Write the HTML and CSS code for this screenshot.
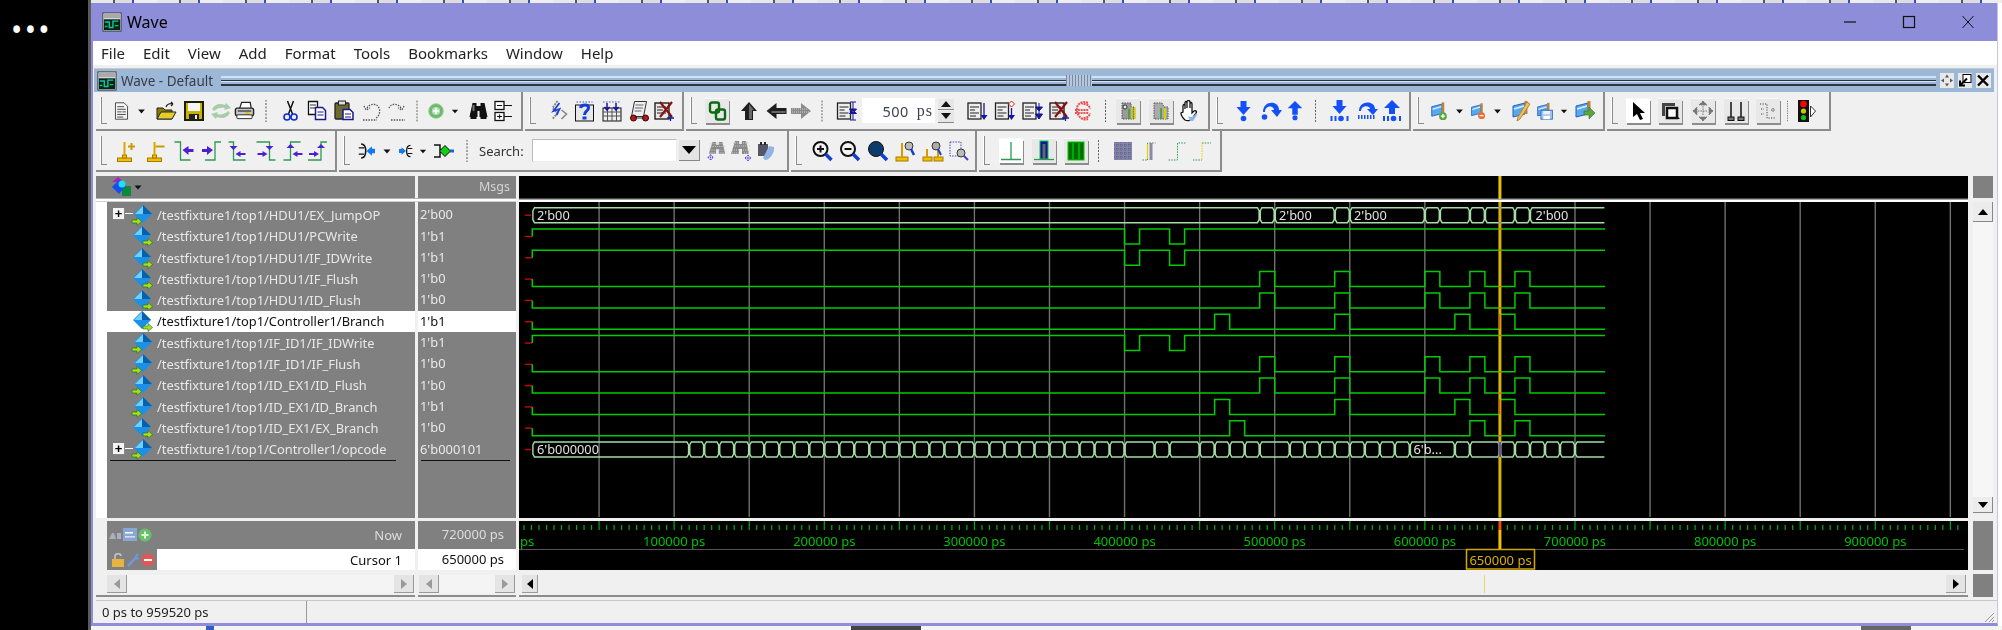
FILE: index.html
```html
<!DOCTYPE html>
<html lang="en">
<head>
<meta charset="utf-8">
<title>Wave</title>
<link rel="stylesheet" href="styles.css">
</head>
<body>
<svg class="defs" width="0" height="0" aria-hidden="true">
<defs>
<symbol id="i-wave" viewBox="0 0 22 22"><rect x="1" y="1" width="20" height="20" fill="#eee" stroke="#333"/><rect x="2" y="2" width="18" height="5" fill="#aaa"/><rect x="2" y="8" width="18" height="12" fill="#02241c"/><path d="M3 11h5v6h4v-7h6" fill="none" stroke="#12c8a0" stroke-width="1.5"/><path d="M3 16h3M14 15h4" stroke="#14d020" stroke-width="1.5"/></symbol>
<symbol id="i-doc" viewBox="0 0 22 22"><path d="M4 1.500h10l4 4v15h-14z" fill="#f4f4f4" stroke="#333"/><path d="M6 6h8M6 9h10M6 12h5M12 12h4M6 15h10M6 18h7" stroke="#333"/></symbol>
<symbol id="i-drop" viewBox="0 0 22 22"><path d="M7.500 9.500h7l-3.500 4z" fill="#111"/></symbol>
<symbol id="i-open" viewBox="0 0 22 22"><path d="M2 8h6l2 2h7v9h-15z" fill="#8f7a00" stroke="#222"/><path d="M2 19l4-7h15l-4 7z" fill="#e6cc2a" stroke="#222"/><path d="M11 7c1-3 4-4 7-3m0 0l-2-2m2 2l-2 2" fill="none" stroke="#222" stroke-width="1.300"/></symbol>
<symbol id="i-save" viewBox="0 0 22 22"><rect x="2" y="2" width="18" height="18" fill="#c8b400" stroke="#1d1d00" stroke-width="2"/><rect x="5" y="3" width="12" height="8" fill="#f4f4f4"/><rect x="6" y="14" width="10" height="6" fill="#222"/><rect x="12" y="15" width="2" height="4" fill="#eee"/></symbol>
<symbol id="i-reload" viewBox="0 0 22 22"><path d="M2 9c3-5 8-6 13-4l1-2 5 5-7 2 1-2c-4-1-8 0-11 3zM20 13c-3 5-8 6-13 4l-1 2-5-5 7-2-1 2c4 1 8 0 11-3z" fill="#a8cca8"/></symbol>
<symbol id="i-print" viewBox="0 0 22 22"><path d="M6 8l2-6h9l1 6" fill="#fff" stroke="#222" stroke-width="1.300"/><rect x="1.500" y="8" width="19" height="8" rx="2" fill="#c8c8c8" stroke="#222" stroke-width="1.500"/><rect x="3" y="15" width="16" height="4" rx="1" fill="#fff" stroke="#222"/><path d="M4 11h14" stroke="#333" stroke-width="1.300"/><rect x="12" y="12" width="4" height="2" fill="#d8c200"/></symbol>
<symbol id="i-sep" viewBox="0 0 22 22"><path d="M11 -4v30" stroke="#555" stroke-dasharray="2 1.500"/></symbol>
<symbol id="i-cut" viewBox="0 0 22 22"><path d="M8 1l5 13M14 1l-5 13" stroke="#111" stroke-width="1.500"/><circle cx="7.500" cy="17" r="3" fill="none" stroke="#0c2cdc" stroke-width="1.600"/><circle cx="14.500" cy="17" r="3" fill="none" stroke="#0c2cdc" stroke-width="1.600"/></symbol>
<symbol id="i-copy" viewBox="0 0 22 22"><path d="M2.500 1.500h9v13h-9z" fill="#fff" stroke="#111" stroke-width="1.300"/><path d="M4 5h6M4 8h6" stroke="#333"/><path d="M9.500 7.500h7l3 3v9h-10z" fill="#fff" stroke="#1a1a8c" stroke-width="1.500"/><path d="M11.500 12h6M11.500 15h6" stroke="#1a1a8c"/></symbol>
<symbol id="i-paste" viewBox="0 0 22 22"><rect x="1.500" y="3" width="14" height="16" rx="1" fill="#6c6a30" stroke="#222" stroke-width="1.300"/><rect x="5" y="1" width="7" height="4" fill="#ddd" stroke="#222"/><path d="M9.500 9.500h7l3 3v7h-10z" fill="#fff" stroke="#1a1a8c" stroke-width="1.500"/><path d="M11.500 14h6M11.500 17h6" stroke="#1a1a8c"/></symbol>
<symbol id="i-undo" viewBox="0 0 22 22"><path d="M6 8c3-5 10-5 12 0s-1 9-3 10M3 6l2 4 4-2M2 20h14" fill="none" stroke="#555" stroke-width="1.300" stroke-dasharray="1.500 1.200"/></symbol>
<symbol id="i-redo" viewBox="0 0 22 22"><path d="M16 8c-3-5-10-5-12 0M19 6l-2 4-4-2M6 20h14" fill="none" stroke="#555" stroke-width="1.300" stroke-dasharray="1.500 1.200"/></symbol>
<symbol id="i-add" viewBox="0 0 22 22"><circle cx="11" cy="11" r="9" fill="#6fb96f" stroke="#9ad09a"/><circle cx="11" cy="11" r="5" fill="#b8e0b8"/><path d="M11 7.500v7M7.500 11h7" stroke="#fff" stroke-width="2"/></symbol>
<symbol id="i-bino" viewBox="0 0 22 22"><path d="M5 3h4v3h4v-3h4l3 14h-8v-6h-2v6h-8z" fill="#111"/><rect x="3" y="13" width="6" height="6" fill="#111"/><rect x="13" y="13" width="6" height="6" fill="#111"/><rect x="5" y="5" width="2" height="6" fill="#777"/></symbol>
<symbol id="i-hier" viewBox="0 0 22 22"><rect x="3" y="1.500" width="9" height="8" fill="#fff" stroke="#111" stroke-width="1.300"/><rect x="3" y="12.500" width="9" height="8" fill="#fff" stroke="#111" stroke-width="1.300"/><path d="M12 5.500h8M12 16.500h8M5 5.500h5M5 16.500h5M7.500 14.500v4" stroke="#111" stroke-width="1.200"/></symbol>
<symbol id="i-comp" viewBox="0 0 22 22"><path d="M11 1l-5 7 5 5-5 6" fill="none" stroke="#888" stroke-width="2" stroke-dasharray="2 1"/><path d="M13 3l-6 8 6-2-3 6" fill="none" stroke="#2040d0" stroke-width="1.800"/><path d="M15 10l5 4-5 5" fill="none" stroke="#888" stroke-width="1.600"/></symbol>
<symbol id="i-help" viewBox="0 0 22 22"><rect x="2" y="5" width="18" height="16" fill="#e8e8e8" stroke="#111"/><path d="M3 2h16" stroke="#4050c0" stroke-dasharray="1.500 1.500"/><path d="M7 8c1-4 9-4 8 0 0 3-4 3-4 7" fill="none" stroke="#1040d8" stroke-width="3"/><rect x="9" y="16.500" width="4" height="3" fill="#1040d8"/></symbol>
<symbol id="i-grid" viewBox="0 0 22 22"><rect x="2" y="8" width="18" height="13" fill="#eee" stroke="#111"/><path d="M2 12h18M2 16h18M6.500 8v13M11 8v13M15.500 8v13" stroke="#555"/><path d="M2 2h18" stroke="#4050c0" stroke-dasharray="1.500 1.500"/><path d="M6 3v7M3.500 7l2.500 3 2.500-3M15 3v7M12.500 7l2.500 3 2.500-3" fill="none" stroke="#14149c" stroke-width="1.500"/></symbol>
<symbol id="i-scroll" viewBox="0 0 22 22"><path d="M6 1.500h12l-3 15h-12z" fill="#eee" stroke="#333"/><path d="M7 5h8M6.500 8h8M6 11h7" stroke="#667"/><circle cx="5" cy="18" r="3" fill="#c01818" stroke="#300"/><circle cx="17" cy="18" r="3" fill="#c01818" stroke="#300"/><path d="M5 18h12" stroke="#333"/></symbol>
<symbol id="i-docx" viewBox="0 0 22 22"><rect x="2" y="3" width="14" height="16" fill="#e8e8e8" stroke="#111" stroke-width="1.300"/><path d="M4 7h9M4 10h6M4 13h9" stroke="#222"/><path d="M7 2l12 15M19 2l-12 15" stroke="#8a1010" stroke-width="2.200"/><path d="M14 18h7M17.500 15v6" stroke="#1a1a9c" stroke-width="1.300"/></symbol>
<symbol id="i-chain" viewBox="0 0 22 22"><rect x="4" y="2.500" width="9" height="10" rx="2" fill="none" stroke="#0c6a10" stroke-width="2.400"/><rect x="10" y="9.500" width="9" height="10" rx="2" fill="none" stroke="#0c6a10" stroke-width="2.400"/></symbol>
<symbol id="i-up" viewBox="0 0 22 22"><path d="M11 2l8 9h-4v9h-8v-9h-4z" fill="#1e1e1e"/><path d="M11 4v15h3v-9h2z" fill="#6a6a6a"/></symbol>
<symbol id="i-left" viewBox="0 0 22 22"><path d="M1 11l10-8v5h10v6h-10v5z" fill="#1e1e1e"/><path d="M6 13h14v-2h-14z" fill="#666"/></symbol>
<symbol id="i-right" viewBox="0 0 22 22"><path d="M21 11l-10-8v5h-10v6h10v5z" fill="#8a8a8a"/><path d="M2 9h15M2 12h17" stroke="#cfcfcf" stroke-dasharray="1 1"/></symbol>
<symbol id="i-mini" viewBox="0 0 22 22"><rect x="1.500" y="3" width="13" height="16" fill="#eee" stroke="#222" stroke-width="1.300"/><path d="M3.500 7h9M3.500 10h5M3.500 13h9M3.500 16h6" stroke="#222" stroke-width="1.200"/></symbol>
<symbol id="i-span" viewBox="0 0 22 22"><use href="#i-mini" width="22" height="22"/><path d="M17 2v18M14 2h6M14 20h6M13.500 9h7l-3.500 4zM13.500 13.500h7l-3.500-3z" stroke="#14149c" fill="#14149c"/></symbol>
<symbol id="i-dn1" viewBox="0 0 22 22"><use href="#i-mini" width="22" height="22"/><path d="M17.500 3v14" stroke="#14149c" stroke-width="1.300"/><path d="M14 15h7l-3.500 5z" fill="#14149c"/></symbol>
<symbol id="i-dn2" viewBox="0 0 22 22"><use href="#i-mini" width="22" height="22"/><path d="M17.500 8v9" stroke="#14149c" stroke-width="1.300"/><path d="M14 15h7l-3.500 5z" fill="#14149c"/><path d="M17.500 1l3 3-3 3-3-3z" fill="#fff" stroke="#d02020"/></symbol>
<symbol id="i-dn3" viewBox="0 0 22 22"><use href="#i-mini" width="22" height="22"/><path d="M14 7h7l-3.500 4zM14 14h7l-3.500 5zM17.500 3v5M17.500 11v4" fill="#14149c" stroke="#14149c"/></symbol>
<symbol id="i-redc" viewBox="0 0 22 22"><path d="M16 3c-7-3-12 2-11 8s6 10 11 8M9 3c3 2 8 0 9 6M9 19c3-2 8 0 9-6M3 10h14M3 13h14" fill="none" stroke="#e85050" stroke-width="2" stroke-dasharray="2 .8"/></symbol>
<symbol id="i-dith1" viewBox="0 0 22 22"><path d="M5 3h9v4h3v12h-12z" fill="#9a9a9a" stroke="#555" stroke-dasharray="1.500 1"/><path d="M15 7v12M18 7v12" stroke="#d8d000" stroke-width="1.500"/><path d="M12 9v10" stroke="#30a030" stroke-width="1.500"/><circle cx="8" cy="7" r="2" fill="#eee" stroke="#333"/></symbol>
<symbol id="i-dith2" viewBox="0 0 22 22"><path d="M4 3h8l2 4h4v12h-14z" fill="#aaa" stroke="#555" stroke-dasharray="1.500 1"/><path d="M15 8v11" stroke="#d8d000" stroke-width="2"/><path d="M11 8v11" stroke="#30a030" stroke-width="1.500"/></symbol>
<symbol id="i-hand" viewBox="0 0 22 22"><path d="M5 12V6c0-2 2-2 2 0v3-6c0-2 2-2 2 0v5-6c0-2 3-2 3 0v6-4c0-2 2-2 2 0v9l2-2c2-1 3 1 2 2l-4 6c-1 2-5 2-7 1-2-2-4-5-4-7z" fill="#fff" stroke="#111" stroke-width="1.300"/><path d="M10 16c3 2 6 1 8-3l1 2-4 6h-3z" fill="#8eb4e8"/></symbol>
<symbol id="a-dn" viewBox="0 0 22 22"><path d="M8 1h6v6h4l-7 8-7-8h4z" fill="#1450f8"/><circle cx="11" cy="18.500" r="2.800" fill="#1450f8"/></symbol>
<symbol id="a-ov" viewBox="0 0 22 22"><path d="M3 12c0-12 16-12 16-2h3l-5 7-6-7h3c0-5-9-5-9 2z" fill="#1450f8"/><circle cx="4.500" cy="17" r="2.800" fill="#1450f8"/></symbol>
<symbol id="a-up" viewBox="0 0 22 22"><path d="M8 15h6v-7h5l-8-8-8 8h5z" fill="#1450f8"/><circle cx="11" cy="18.500" r="2.800" fill="#1450f8"/></symbol>
<symbol id="a-dn2" viewBox="0 0 22 22"><path d="M8 0h6v6h4l-7 8-7-8h4z" fill="#1450f8"/><path d="M2 16h2v5h-2zM6 16h2v5h-2zM18 16h2v5h-2z" fill="#1450f8"/><circle cx="12.500" cy="18.500" r="2.800" fill="#1450f8"/></symbol>
<symbol id="a-ov2" viewBox="0 0 22 22"><path d="M3 11c0-11 16-11 16-2h3l-5 6-6-6h3c0-4-9-4-9 2z" fill="#1450f8"/><path d="M2 17h18" stroke="#1450f8" stroke-width="4" stroke-dasharray="1.500 1.500"/></symbol>
<symbol id="a-up2" viewBox="0 0 22 22"><path d="M8 14h6v-6h5l-8-8-8 8h5z" fill="#1450f8"/><path d="M2 16h2v5h-2zM6 16h2v5h-2zM18 16h2v5h-2z" fill="#1450f8"/><circle cx="12.500" cy="18.500" r="2.800" fill="#1450f8"/></symbol>
<symbol id="i-win" viewBox="0 0 22 22"><path d="M2 6l12-3v11l-12 3z" fill="#5aa8ec" stroke="#2060c0"/><path d="M3 9l10-3" stroke="#d8f0ff" stroke-width="1.500"/><rect x="13.500" y="1" width="3" height="13" fill="#b8843c"/></symbol>
<symbol id="f-add" viewBox="0 0 22 22"><use href="#i-win" width="22" height="22"/><circle cx="15" cy="17" r="4.500" fill="#55a840"/><path d="M15 14.500v5M12.500 17h5" stroke="#fff" stroke-width="1.500"/></symbol>
<symbol id="f-del" viewBox="0 0 22 22"><use href="#i-win" width="22" height="22"/><circle cx="15" cy="17" r="4.500" fill="#e87030"/><path d="M12.500 17h5" stroke="#fff" stroke-width="1.500"/></symbol>
<symbol id="f-edit" viewBox="0 0 22 22"><use href="#i-win" width="22" height="22"/><path d="M19 4l-10 15-3 2 1-4 9-15z" fill="#eec064" stroke="#b8843c"/></symbol>
<symbol id="f-save" viewBox="0 0 22 22"><use href="#i-win" width="22" height="22"/><rect x="6" y="10" width="14" height="11" fill="#a8c4e8" stroke="#2060c0"/><rect x="9" y="11" width="8" height="4" fill="#eef"/><rect x="9" y="17" width="8" height="4" fill="#fff"/></symbol>
<symbol id="f-go" viewBox="0 0 22 22"><use href="#i-win" width="22" height="22"/><path d="M10 11h5v-4l6 6-6 6v-4h-5z" fill="#55a840" stroke="#387028" stroke-width=".6"/></symbol>
<symbol id="i-arrow" viewBox="0 0 22 22"><path d="M6 2v15l4-3 3 6 3-1-3-6h5z" fill="#000"/></symbol>
<symbol id="i-zoombx" viewBox="0 0 22 22"><path d="M3 3h13v3h-10v10h-3z" fill="#444"/><rect x="8" y="8" width="10" height="10" fill="#fff" stroke="#111" stroke-width="2.500"/><path d="M15 19h6l-3-3z" fill="#111"/></symbol>
<symbol id="i-move" viewBox="0 0 22 22"><path d="M11 1l-4 4h8zM11 21l-4-4h8zM1 11l4-4v8zM21 11l-4-4v8zM11 6v10M6 11h10" fill="#777" stroke="#777" stroke-dasharray="1.500 1"/></symbol>
<symbol id="i-ins" viewBox="0 0 22 22"><path d="M6 2v15M16 2v15" stroke="#111" stroke-width="1.500"/><rect x="3" y="17" width="6" height="3.500" fill="#777" stroke="#111"/><rect x="13" y="17" width="6" height="3.500" fill="#777" stroke="#111"/></symbol>
<symbol id="i-dots" viewBox="0 0 22 22"><path d="M3 4h7v14h9M4 9h3M4 14h3M16 8v4M14 10h4" fill="none" stroke="#444" stroke-dasharray="1.200 1.300"/></symbol>
<symbol id="i-light" viewBox="0 0 22 22"><rect x="3" y="0" width="11" height="22" fill="#111"/><circle cx="8.500" cy="4" r="3.300" fill="#f00"/><circle cx="8.500" cy="11" r="2.600" fill="#c8c800"/><circle cx="8.500" cy="17.500" r="2.600" fill="#18c018"/><path d="M15.500 6l5 5-5 6z" fill="#fff" stroke="#333"/></symbol>
<symbol id="c-add" viewBox="0 0 22 22"><rect x="1" y="18" width="14" height="3.500" fill="#f0c000" stroke="#a87800"/><rect x="6" y="15" width="4" height="3" fill="#f0c000" stroke="#a87800"/><path d="M8 2v13" stroke="#d8a800" stroke-width="2"/><path d="M15 3v7M11.500 6.500h7" stroke="#c89c00" stroke-width="2"/></symbol>
<symbol id="c-del" viewBox="0 0 22 22"><rect x="3" y="18" width="14" height="3.500" fill="#f0c000" stroke="#a87800"/><rect x="8" y="15" width="4" height="3" fill="#f0c000" stroke="#a87800"/><path d="M10 2v13" stroke="#d8a800" stroke-width="2"/><path d="M11 6.500h9" stroke="#c89c00" stroke-width="2"/></symbol>
<symbol id="e-1" viewBox="0 0 22 22"><path d="M1 2h6v18h10" fill="none" stroke="#2c9a50" stroke-width="1.300"/><path d="M9 10l6-4v3h5v3h-5v3z" fill="#4c20d0"/></symbol>
<symbol id="e-2" viewBox="0 0 22 22"><path d="M5 20h10v-18h6" fill="none" stroke="#2c9a50" stroke-width="1.300"/><path d="M13 10l-6-4v3h-5v3h5v3z" fill="#4c20d0"/></symbol>
<symbol id="e-3" viewBox="0 0 22 22"><path d="M2 2h5v18h12" fill="none" stroke="#2c9a50" stroke-width="1.300"/><path d="M3 6h8l-4 4zM9 14l5-3v2h5v2h-5v2z" fill="#4c20d0"/></symbol>
<symbol id="e-4" viewBox="0 0 22 22"><path d="M2 2h13v18h6" fill="none" stroke="#2c9a50" stroke-width="1.300"/><path d="M11 6h8l-4 4zM13 14l-5-3v2h-5v2h5v2z" fill="#4c20d0"/></symbol>
<symbol id="e-5" viewBox="0 0 22 22"><path d="M2 20h7v-18h10" fill="none" stroke="#2c9a50" stroke-width="1.300"/><path d="M5 8h8l-4-4zM11 14l5-3v2h5v2h-5v2z" fill="#4c20d0"/></symbol>
<symbol id="e-6" viewBox="0 0 22 22"><path d="M2 20h13v-18h6" fill="none" stroke="#2c9a50" stroke-width="1.300"/><path d="M11 8h8l-4-4zM13 14l-5-3v2h-5v2h5v2z" fill="#4c20d0"/></symbol>
<symbol id="j-1" viewBox="0 0 22 22"><path d="M4 2c5 0 6 5 6 9s-1 9-6 9" fill="none" stroke="#111" stroke-width="2"/><path d="M1 7h7M1 15h7" stroke="#111" stroke-width="1.600"/><path d="M11 11l7-6v3h4v6h-4v3z" fill="#1078f0"/></symbol>
<symbol id="j-2" viewBox="0 0 22 22"><path d="M18 2c-5 0-6 5-6 9s1 9 6 9" fill="none" stroke="#111" stroke-width="2"/><path d="M14 7h7M14 15h7" stroke="#111" stroke-width="1.600"/><path d="M11 11l-7-6v3h-4v6h4v3z" fill="#1078f0"/></symbol>
<symbol id="j-3" viewBox="0 0 22 22"><path d="M1 5h6v12h-6M7 11l5-5 5 5-5 5z" fill="none" stroke="#111" stroke-width="1.500"/><path d="M12 6l5 5-5 5-5-5z" fill="#10d010"/><path d="M17 11h4" stroke="#2060e0" stroke-width="3"/></symbol>
<symbol id="s-1" viewBox="0 0 22 22"><path d="M6 1h4v3h3v-3h4l3 13h-7v-5h-3v5h-8z" fill="#8a8a8a"/><path d="M3 3h16M3 6h17M2 10h8M13 10h7M2 13h7M14 13h6" stroke="#cfcfcf" stroke-dasharray="1 1"/><path d="M1 18l3-3 3 3-3 3zM4 15v6M1 18h6" fill="none" stroke="#4c40e0" stroke-dasharray="1.400 .8"/></symbol>
<symbol id="s-2" viewBox="0 0 22 22"><path d="M5 1h4v3h3v-3h4l3 13h-7v-5h-3v5h-8z" fill="#8a8a8a"/><path d="M3 3h16M3 6h17M2 10h8M13 10h7M2 13h7M14 13h6" stroke="#cfcfcf" stroke-dasharray="1 1"/><path d="M15 18l3-3 3 3-3 3zM18 15v6M15 18h6" fill="none" stroke="#4c40e0" stroke-dasharray="1.400 .8"/></symbol>
<symbol id="s-3" viewBox="0 0 22 22"><rect x="3" y="4" width="10" height="12" fill="#556" /><path d="M6 2v3M10 2v3" stroke="#223" stroke-width="2"/><path d="M19 7c1 5-4 13-9 13l-2-2 6-12z" fill="#90b4e4"/></symbol>
<symbol id="z-in" viewBox="0 0 22 22"><circle cx="9" cy="9" r="7" fill="#f4f4f4" stroke="#111" stroke-width="2"/><path d="M9 5.500v7M5.500 9h7" stroke="#111" stroke-width="2"/><path d="M14 14l6 6" stroke="#1040c8" stroke-width="3.500"/></symbol>
<symbol id="z-out" viewBox="0 0 22 22"><circle cx="9" cy="9" r="7" fill="#f4f4f4" stroke="#111" stroke-width="2"/><path d="M5.500 9h7" stroke="#111" stroke-width="2"/><path d="M14 14l6 6" stroke="#1040c8" stroke-width="3.500"/></symbol>
<symbol id="z-full" viewBox="0 0 22 22"><circle cx="9" cy="9" r="7.500" fill="#0c3c6c" stroke="#111"/><path d="M14 14l6 6" stroke="#1040c8" stroke-width="3.500"/></symbol>
<symbol id="z-cur" viewBox="0 0 22 22"><rect x="1" y="17" width="12" height="4" fill="#f0c000" stroke="#a87800"/><path d="M7 3v14" stroke="#d89c00" stroke-width="2"/><circle cx="14" cy="6" r="4" fill="#bbb" stroke="#333"/><path d="M16 9l3 6" stroke="#1040c8" stroke-width="2.500"/></symbol>
<symbol id="z-cur2" viewBox="0 0 22 22"><rect x="0" y="17" width="9" height="4" fill="#f0c000" stroke="#a87800"/><rect x="11" y="17" width="9" height="4" fill="#f0c000" stroke="#a87800"/><path d="M4 9v8M15 9v8" stroke="#d89c00" stroke-width="2"/><circle cx="13" cy="6" r="4" fill="#aaa" stroke="#333"/><path d="M15 9l3 6" stroke="#1040c8" stroke-width="2"/></symbol>
<symbol id="z-box" viewBox="0 0 22 22"><path d="M2 2h11v14h-11z" fill="none" stroke="#4040c8" stroke-dasharray="1.500 1.200"/><circle cx="13" cy="13" r="4" fill="#bbb" stroke="#333"/><path d="M16 16l4 4" stroke="#4040c8" stroke-width="2"/></symbol>
<symbol id="w-1" viewBox="0 0 22 22"><path d="M11 2v17M1 19.500h20" stroke="#2c9a50" stroke-width="1.300"/></symbol>
<symbol id="w-2" viewBox="0 0 22 22"><rect x="7" y="1" width="8" height="18" fill="#14149c" stroke="#0c4"/><rect x="9.500" y="4" width="3" height="15" fill="#666"/><path d="M1 19.500h20" stroke="#2c9a50" stroke-width="1.300"/></symbol>
<symbol id="w-3" viewBox="0 0 22 22"><rect x="3" y="2" width="16" height="18" fill="#006a00" stroke="#0c0"/><path d="M8 3v17M14 3v17" stroke="#0a0" stroke-width="2"/></symbol>
<symbol id="w-4" viewBox="0 0 22 22"><rect x="2" y="2" width="18" height="18" fill="#8484a8"/><path d="M2 5h18M2 9h18M2 13h18M2 17h18M5 2v18M9 2v18M13 2v18M17 2v18" stroke="#5c5c88" stroke-dasharray="1 1"/></symbol>
<symbol id="w-5" viewBox="0 0 22 22"><path d="M3 20h5M8 20V3h8" fill="none" stroke="#2c9a50" stroke-dasharray="1.500 1.200"/><path d="M8 4v15" stroke="#dcd400" stroke-width="1.300"/><rect x="10" y="3" width="3" height="17" fill="#8a8aa4"/></symbol>
<symbol id="w-6" viewBox="0 0 22 22"><path d="M2 20h9V3h9" fill="none" stroke="#2c9a50" stroke-dasharray="1.500 1.200"/></symbol>
<symbol id="w-7" viewBox="0 0 22 22"><path d="M2 20h9M11 3h9" fill="none" stroke="#2c9a50" stroke-dasharray="1.500 1.200"/><path d="M11 3v17" stroke="#dcd400" stroke-dasharray="1.500 1"/></symbol>
<symbol id="sig-out" viewBox="0 0 22 22"><path d="M11 1l9 9-9 9-9-9z" fill="#1a90e8"/><path d="M11 1l9 9h-9z" fill="#0860a8"/><path d="M3 10l8-8v8z" fill="#70d0f8"/><path d="M12 16h5v-2.500l4.500 4-4.500 4v-2.500h-5z" fill="#a4e020" stroke="#1a6a10" stroke-width=".6"/></symbol>
<symbol id="sig-in" viewBox="0 0 22 22"><path d="M12 1l9 9-9 9-9-9z" fill="#1a90e8"/><path d="M12 1l9 9h-9z" fill="#0860a8"/><path d="M4 10l8-8v8z" fill="#70d0f8"/><path d="M1 16h5v-2.500l4.500 4-4.500 4v-2.500h-5z" fill="#a4e020" stroke="#1a6a10" stroke-width=".6"/></symbol>
<symbol id="hdr" viewBox="0 0 22 22"><path d="M8 1l-6 5h12z" fill="#b020b8"/><rect x="12" y="10" width="9" height="10" fill="#0c8a3c"/><path d="M9 4l7 6-7 8-7-7z" fill="#1050f0"/><circle cx="12" cy="8" r="3.500" fill="#20e0f0"/></symbol>
<symbol id="g-1" viewBox="0 0 14 14"><path d="M1 11l3-6h2l2 6zM9 5h4v6h-4z" fill="#aab0c0"/></symbol>
<symbol id="g-2" viewBox="0 0 14 14"><rect width="14" height="13" fill="#88a8d4"/><rect x="2" y="4" width="8" height="1.500" fill="#fff"/><rect x="2" y="8" width="10" height="1.500" fill="#dde"/></symbol>
<symbol id="g-3" viewBox="0 0 14 14"><circle cx="7" cy="7" r="6.500" fill="#68c068"/><path d="M7 3.500v7M3.500 7h7" stroke="#e0f8e0" stroke-width="2"/></symbol>
<symbol id="g-lock" viewBox="0 0 14 14"><rect x="1" y="6" width="12" height="8" fill="#e8b440"/><path d="M4 6V3c0-3 6-3 6 0" fill="none" stroke="#c8c8c8" stroke-width="1.500"/></symbol>
<symbol id="g-wr" viewBox="0 0 14 14"><path d="M1 12L9 4c0-2 2-4 4-3l-2 3 2 1c0 2-2 2-3 1l-7 8z" fill="#7098dc"/></symbol>
<symbol id="g-no" viewBox="0 0 14 14"><circle cx="7" cy="7" r="6.500" fill="#e05858"/><path d="M3 7h8" stroke="#fff" stroke-width="2"/></symbol>
</defs>
</svg>

<div class="desk">
  <aside class="side"><span class="dots">•••</span></aside>
  <div class="gutter"></div>
  <div class="backdrop">
    <div class="remnant"></div>
    <main class="window">
      <header class="titlebar">
        <svg class="app-ic"><use href="#i-wave"/></svg>
        <span class="app-title">Wave</span>
        <span class="win-ctl">
          <svg class="wc" viewBox="0 0 14 14"><path d="M1 7h12" stroke="#111" stroke-width="1.200"/></svg>
          <svg class="wc" viewBox="0 0 14 14"><rect x="1.500" y="1.500" width="11" height="11" fill="none" stroke="#111" stroke-width="1.200"/></svg>
          <svg class="wc" viewBox="0 0 14 14"><path d="M1.500 1l11 12M12.500 1l-11 12" stroke="#111"/></svg>
        </span>
      </header>
      <nav class="menubar">
        <span>File</span><span>Edit</span><span>View</span><span>Add</span><span>Format</span><span>Tools</span><span>Bookmarks</span><span>Window</span><span>Help</span>
      </nav>
      <section class="client">
        <div class="docbar">
          <svg class="doc-ic"><use href="#i-wave"/></svg>
          <span class="doc-title">Wave - Default</span>
          <span class="grip"></span>
          <span class="grip-h"></span>
          <span class="grip"></span>
          <span class="doc-btn"><svg viewBox="0 0 14 14"><path d="M7 1l-2 3h4zM7 13l-2-3h4zM1 7l3-2v4zM13 7l-3-2v4z" fill="#555"/></svg></span>
          <span class="doc-btn"><svg viewBox="0 0 14 14"><rect x="5" y="1" width="8" height="8" fill="#fff" stroke="#000"/><path d="M2 12l7-7M2 7v5h5" fill="none" stroke="#000" stroke-width="2"/></svg></span>
          <span class="doc-btn"><svg viewBox="0 0 14 14"><path d="M2 2l10 10M12 2l-10 10" stroke="#000" stroke-width="2.400"/></svg></span>
        </div>

        <div class="tb-row">
          <div class="tb t1a">
            <svg class="ic w19"><use href="#i-doc"/></svg><svg class="ic w21"><use href="#i-drop"/></svg><svg class="ic w28"><use href="#i-open"/></svg><svg class="ic w28"><use href="#i-save"/></svg><svg class="ic w26"><use href="#i-reload"/></svg><svg class="ic w21"><use href="#i-print"/></svg><svg class="ic w22"><use href="#i-sep"/></svg><svg class="ic w27"><use href="#i-cut"/></svg><svg class="ic w26"><use href="#i-copy"/></svg><svg class="ic w29"><use href="#i-paste"/></svg><svg class="ic w26"><use href="#i-undo"/></svg><svg class="ic w22"><use href="#i-redo"/></svg><svg class="ic w20"><use href="#i-sep"/></svg><svg class="ic w18"><use href="#i-add"/></svg><svg class="ic w20"><use href="#i-drop"/></svg><svg class="ic w27"><use href="#i-bino"/></svg><svg class="ic"><use href="#i-hier"/></svg>
          </div>
          <div class="tb t1b">
            <svg class="ic w27"><use href="#i-comp"/></svg><svg class="ic w27"><use href="#i-help"/></svg><svg class="ic w28"><use href="#i-grid"/></svg><svg class="ic w27"><use href="#i-scroll"/></svg><svg class="ic"><use href="#i-docx"/></svg>
          </div>
          <div class="tb t1c">
            <svg class="ic w29 raised"><use href="#i-chain"/></svg><svg class="ic w28"><use href="#i-up"/></svg><svg class="ic w27"><use href="#i-left"/></svg><svg class="ic w22"><use href="#i-right"/></svg><svg class="ic w20"><use href="#i-sep"/></svg><svg class="ic w30"><use href="#i-span"/></svg>
            <span class="runlen"><b>500</b><b>ps</b></span>
            <span class="spin"><i class="spin-up"></i><i class="spin-dn"></i></span>
            <svg class="ic w27 after-spin"><use href="#i-dn1"/></svg><svg class="ic w28"><use href="#i-dn2"/></svg><svg class="ic w27"><use href="#i-dn3"/></svg><svg class="ic w26"><use href="#i-docx"/></svg><svg class="ic w22"><use href="#i-redc"/></svg><svg class="ic w23"><use href="#i-sep"/></svg><svg class="ic w33 raised"><use href="#i-dith1"/></svg><svg class="ic w28 raised"><use href="#i-dith2"/></svg><svg class="ic"><use href="#i-hand"/></svg>
          </div>
          <div class="tb t1d">
            <svg class="ic w27"><use href="#a-dn"/></svg><svg class="ic w28"><use href="#a-ov"/></svg><svg class="ic w20"><use href="#a-up"/></svg><svg class="ic w21"><use href="#i-sep"/></svg><svg class="ic w27"><use href="#a-dn2"/></svg><svg class="ic w28"><use href="#a-ov2"/></svg><svg class="ic"><use href="#a-up2"/></svg>
          </div>
          <div class="tb t1e">
            <svg class="ic w19"><use href="#f-add"/></svg><svg class="ic w21"><use href="#i-drop"/></svg><svg class="ic w17"><use href="#f-del"/></svg><svg class="ic w21"><use href="#i-drop"/></svg><svg class="ic w28"><use href="#f-edit"/></svg><svg class="ic w18"><use href="#f-save"/></svg><svg class="ic w20"><use href="#i-drop"/></svg><svg class="ic"><use href="#f-go"/></svg>
          </div>
          <div class="tb t1f">
            <svg class="ic w32 raised pressed"><use href="#i-arrow"/></svg><svg class="ic w33 raised"><use href="#i-zoombx"/></svg><svg class="ic w33 raised"><use href="#i-move"/></svg><svg class="ic w32 raised"><use href="#i-ins"/></svg><svg class="ic w23 raised"><use href="#i-dots"/></svg><svg class="ic w15"><use href="#i-sep"/></svg><svg class="ic"><use href="#i-light"/></svg>
          </div>
        </div>

        <div class="tb-row second">
          <div class="tb t2a">
            <svg class="ic w27"><use href="#c-add"/></svg><svg class="ic w29"><use href="#c-del"/></svg><svg class="ic w29"><use href="#e-1"/></svg><svg class="ic w24"><use href="#e-2"/></svg><svg class="ic w29"><use href="#e-3"/></svg><svg class="ic w27"><use href="#e-4"/></svg><svg class="ic w27"><use href="#e-5"/></svg><svg class="ic"><use href="#e-6"/></svg>
          </div>
          <div class="tb t2b">
            <svg class="ic w17"><use href="#j-1"/></svg><svg class="ic w24"><use href="#i-drop"/></svg><svg class="ic w14"><use href="#j-2"/></svg><svg class="ic w20"><use href="#i-drop"/></svg><svg class="ic w22"><use href="#j-3"/></svg><svg class="ic w24"><use href="#i-sep"/></svg>
            <label class="search-l">Search:</label>
            <span class="search-box"></span>
            <span class="search-drop"><i></i></span>
            <svg class="ic w20 after-drop"><use href="#s-1"/></svg><svg class="ic w28"><use href="#s-2"/></svg><svg class="ic"><use href="#s-3"/></svg>
          </div>
          <div class="tb t2c">
            <svg class="ic w27"><use href="#z-in"/></svg><svg class="ic w28"><use href="#z-out"/></svg><svg class="ic w28"><use href="#z-full"/></svg><svg class="ic w28"><use href="#z-cur"/></svg><svg class="ic w28"><use href="#z-cur2"/></svg><svg class="ic"><use href="#z-box"/></svg>
          </div>
          <div class="tb t2d">
            <svg class="ic w33 raised pressed"><use href="#w-1"/></svg><svg class="ic w32 raised"><use href="#w-2"/></svg><svg class="ic w23 raised"><use href="#w-3"/></svg><svg class="ic w21"><use href="#i-sep"/></svg><svg class="ic w28"><use href="#w-4"/></svg><svg class="ic w27"><use href="#w-5"/></svg><svg class="ic w27"><use href="#w-6"/></svg><svg class="ic"><use href="#w-7"/></svg>
          </div>
        </div>

        <div class="panes">
          <div class="hdr-name"><svg class="hdr-ic"><use href="#hdr"/></svg><svg class="hdr-drop"><use href="#i-drop"/></svg></div>
          <div class="hdr-val">Msgs</div>
          <div class="rule"></div>
          <div class="names">
            <div class="sig"><span class="xbox">+</span><svg class="s-ic"><use href="#sig-in"/></svg><span>/testfixture1/top1/HDU1/EX_JumpOP</span></div>
            <div class="sig"><svg class="s-ic"><use href="#sig-out"/></svg><span>/testfixture1/top1/HDU1/PCWrite</span></div>
            <div class="sig"><svg class="s-ic"><use href="#sig-out"/></svg><span>/testfixture1/top1/HDU1/IF_IDWrite</span></div>
            <div class="sig"><svg class="s-ic"><use href="#sig-out"/></svg><span>/testfixture1/top1/HDU1/IF_Flush</span></div>
            <div class="sig"><svg class="s-ic"><use href="#sig-out"/></svg><span>/testfixture1/top1/HDU1/ID_Flush</span></div>
            <div class="sig sel"><svg class="s-ic"><use href="#sig-out"/></svg><span>/testfixture1/top1/Controller1/Branch</span></div>
            <div class="sig"><svg class="s-ic"><use href="#sig-in"/></svg><span>/testfixture1/top1/IF_ID1/IF_IDWrite</span></div>
            <div class="sig"><svg class="s-ic"><use href="#sig-in"/></svg><span>/testfixture1/top1/IF_ID1/IF_Flush</span></div>
            <div class="sig"><svg class="s-ic"><use href="#sig-in"/></svg><span>/testfixture1/top1/ID_EX1/ID_Flush</span></div>
            <div class="sig"><svg class="s-ic"><use href="#sig-in"/></svg><span>/testfixture1/top1/ID_EX1/ID_Branch</span></div>
            <div class="sig"><svg class="s-ic"><use href="#sig-out"/></svg><span>/testfixture1/top1/ID_EX1/EX_Branch</span></div>
            <div class="sig"><span class="xbox">+</span><svg class="s-ic"><use href="#sig-in"/></svg><span>/testfixture1/top1/Controller1/opcode</span></div>
            <div class="endline"></div>
          </div>
          <div class="values">
            <div class="val">2'b00</div><div class="val">1'b1</div><div class="val">1'b1</div><div class="val">1'b0</div><div class="val">1'b0</div>
            <div class="val sel">1'b1</div>
            <div class="val">1'b1</div><div class="val">1'b0</div><div class="val">1'b0</div><div class="val">1'b1</div><div class="val">1'b0</div><div class="val">6'b000101</div>
            <div class="endline short"></div>
          </div>
          <svg id="waves" class="waves" viewBox="519 176 1449 342"></svg>
          <div class="vbar">
            <span class="vb-btn up"><i></i></span>
            <span class="vb-track"></span>
            <span class="vb-btn dn"><i></i></span>
          </div>

          <div class="now-name"><span class="gi"><svg><use href="#g-1"/></svg><svg><use href="#g-2"/></svg><svg><use href="#g-3"/></svg></span><span>Now</span></div>
          <div class="now-val">720000 ps</div>
          <svg id="ruler" class="ruler" viewBox="519 521 1449 49"></svg>
          <div class="vb-gray big"></div>
          <div class="cur-name"><span class="gi lower"><svg><use href="#g-lock"/></svg><svg><use href="#g-wr"/></svg><svg><use href="#g-no"/></svg></span><span class="cur-label">Cursor 1</span></div>
          <div class="cur-val">650000 ps</div>

          <div class="hs hs-name"><span class="hs-btn"><i class="l"></i></span><span class="hs-track dith"></span><span class="hs-btn"><i class="r"></i></span></div>
          <div class="hs hs-val"><span class="hs-btn"><i class="l"></i></span><span class="hs-track"></span><span class="hs-btn"><i class="r"></i></span></div>
          <div class="hs hs-wave"><span class="hs-btn narrow"><i class="l k"></i></span><span class="hs-track marked"><i class="mark"></i></span><span class="hs-btn"><i class="r k"></i></span></div>
          <div class="vb-gray"></div>
        </div>

        <footer class="status"><span class="st-a">0 ps to 959520 ps</span><span class="st-b"></span><svg class="resize" viewBox="0 0 14 14"><path d="M13 4L4 13M13 8l-5 5M13 11l-2 2" stroke="#999"/></svg></footer>
      </section>
    </main>
    <div class="remnant lower-r"></div>
  </div>
</div>
<script src="wave.js"></script>
</body>
</html>
```
FILE: styles.css
```css
* { box-sizing: border-box; }
html, body { margin: 0; width: 2002px; height: 630px; overflow: hidden; background: #fff; }
body { font-family: "Noto Sans", "Open Sans", sans-serif; font-size: 13px; color: #111; }
.defs { position: absolute; }

.desk { display: flex; width: 2002px; height: 630px; }
.side { flex: none; width: 88px; background: #000; color: #fff; padding: 13px 0 0 11px; font-size: 30px; line-height: 34px; letter-spacing: 2.400px; }
.dots { display: block; }
.gutter { flex: none; width: 3px; background: #5a5a5a; }
.backdrop { flex: none; width: 1911px; display: flex; flex-direction: column; }
.remnant { flex: none; height: 3px; background: repeating-linear-gradient(90deg, #e8e8e8 0 22px, #555 22px 24px, #ddd 24px 41px, #3050c0 41px 43px, #eee 43px 66px); }
.remnant.lower-r { height: 4px; background:
  linear-gradient(#444, #444) 760px 0 / 70px 4px no-repeat,
  linear-gradient(#3060c0, #3060c0) 115px 0 / 8px 4px no-repeat,
  linear-gradient(#666, #666) 1770px 0 / 50px 4px no-repeat,
  #f4f4f4; }

.window { flex: none; width: 1907px; height: 623px; background: #f0f0f0; display: flex; flex-direction: column; border-left: 2px solid #8d8dd9; border-right: 1px solid #c4c4ee; border-bottom: 3px solid #8d8dd9; filter: blur(.3px); }

.titlebar { flex: none; height: 38px; background: #8d8dd9; display: flex; align-items: center; padding-left: 9px; }
.app-ic { width: 20px; height: 20px; }
.app-title { margin-left: 5px; font-size: 16px; color: #000; }
.win-ctl { margin-left: auto; display: flex; gap: 45px; padding-right: 22px; align-items: center; }
.wc { width: 14px; height: 14px; }

.menubar { flex: none; height: 24px; background: #fff; display: flex; align-items: center; gap: 18px; padding-left: 8px; font-size: 15px; color: #222; }

.client { flex: 1; min-height: 0; background: #f0f0f0; padding: 3px 0 0 3px; display: flex; flex-direction: column; }
.docbar { flex: none; height: 24px; background: #9db8d6; border-top: 1px solid #c8c8c8; display: flex; align-items: center; padding-left: 3px; margin: 0 3px 0 -2px; }
.doc-ic { width: 20px; height: 20px; }
.doc-title { margin-left: 4px; color: #3a3a48; font-size: 13.500px; width: 100px; flex: none; }
.grip { flex: 1; height: 10px; border-top: 2px solid #cfe4f4; border-bottom: 2px solid #2c3444; background: linear-gradient(#2c3444 0 1px, #cfe4f4 1px 2px, transparent 2px) 0 2px / 100% 3px no-repeat; }
.grip-h { flex: none; width: 26px; height: 11px; background: repeating-linear-gradient(90deg, #7a8aa0 0 1px, #b8c8dc 1px 3px); }
.doc-btn { flex: none; width: 14px; height: 15px; margin-left: 4px; background: #e8e8e8; display: flex; }
.doc-btn:nth-of-type(3) { margin-left: 7px; }
.doc-btn:last-child { width: 15px; margin-right: 3px; }
.doc-btn svg { width: 14px; height: 15px; }

.tb-row { flex: none; height: 39px; display: flex; gap: 2px; }
.tb-row.second { height: 41px; }
.tb { flex: none; height: 100%; display: flex; align-items: center; border-bottom: 2px solid #8c8c8c; border-right: 2px solid #8c8c8c; background:
  linear-gradient(#8a8a8a, #8a8a8a) 5px 5px / 1px calc(100% - 10px) no-repeat,
  linear-gradient(#8a8a8a, #8a8a8a) 5px calc(100% - 5px) / 6px 1px no-repeat,
  linear-gradient(#fff, #fff) 4px 5px / 1px calc(100% - 10px) no-repeat,
  #f0f0f0; }
.t1a { width: 427px; padding-left: 16px; }
.t1b { width: 159px; padding-left: 19px; }
.t1c { width: 524px; padding-left: 20px; }
.t1d { width: 199px; padding-left: 18px; }
.t1e { width: 192px; padding-left: 17px; }
.t1f { width: 224px; padding-left: 20px; }
.t2a { width: 241px; padding-left: 18px; }
.t2b { width: 450px; padding-left: 19px; }
.t2c { width: 186px; padding-left: 18px; }
.t2d { width: 243px; padding-left: 21px; }

.ic { flex: none; display: block; width: 22px; height: 22px; overflow: visible; }
.ic > use { width: 22px; height: 22px; }
.w14 { width: 14px; } .w15 { width: 15px; } .w17 { width: 17px; } .w18 { width: 18px; } .w19 { width: 19px; }
.w20 { width: 20px; } .w21 { width: 21px; } .w22 { width: 22px; } .w23 { width: 23px; } .w24 { width: 24px; }
.w26 { width: 26px; } .w27 { width: 27px; } .w28 { width: 28px; } .w29 { width: 29px; } .w30 { width: 30px; }
.w32 { width: 32px; } .w33 { width: 33px; }
.raised { width: 22px; background: #e8e8e8; box-shadow: -1px -2px 0 0 #f8f8f8, 1px 2px 0 1px #8c8c8c; outline: 1px solid #e8e8e8; }
.raised.w23 { margin-right: 1px; }
.raised.w28 { margin-right: 6px; }
.raised.w29 { margin-right: 7px; }
.raised.w32 { margin-right: 10px; }
.raised.w33 { margin-right: 11px; }
.pressed { background: #fff; outline-color: #fff; }

.runlen { flex: none; width: 73px; height: 25px; background: #fff; display: flex; justify-content: flex-end; align-items: center; gap: 8px; padding-right: 2px; font-size: 14.500px; color: #3c4450; }
.runlen b { font-weight: 400; letter-spacing: .5px; }
.runlen b + b { font-family: "Liberation Serif", serif; font-size: 16px; letter-spacing: 1px; }
.spin { flex: none; width: 16px; height: 24px; margin-left: 3px; display: flex; flex-direction: column; gap: 1px; }
.spin i { flex: 1; display: flex; justify-content: center; align-items: center; background: #e6e6e6; border-bottom: 1px solid #888; }
.spin-up::before { content: ""; border: 5px solid transparent; border-top: 0; border-bottom: 6px solid #111; }
.spin-dn::before { content: ""; border: 5px solid transparent; border-bottom: 0; border-top: 6px solid #111; }
.after-spin { margin-left: 10px; }

.search-l { flex: none; width: 53px; font-size: 13px; color: #333; }
.search-box { flex: none; width: 145px; height: 23px; background: #fff; border: 1px solid #bbb; border-right-color: #eee; border-bottom-color: #eee; }
.search-drop { flex: none; width: 21px; height: 21px; margin-left: 2px; background: #e4e4e4; border-right: 1px solid #888; border-bottom: 1px solid #888; display: flex; align-items: center; justify-content: center; }
.search-drop i { border: 7px solid transparent; border-bottom: 0; border-top: 8px solid #000; }
.after-drop { margin-left: 7px; }

.panes { flex: none; margin-top: 4px; display: grid; grid-template-columns: 319px 98px 1449px 22px; column-gap: 3px; grid-template-rows: 22px 4px 316px 3px 28px 21px 4px 23px; position: relative; width: 1900px; }
.panes > .vbar, .panes > .vb-gray { margin-left: 2px; }
.hdr-name { grid-column: 1; grid-row: 1; background: #808080; display: flex; align-items: center; padding-left: 14px; }
.hdr-ic { width: 22px; height: 22px; }
.hdr-drop { width: 22px; height: 22px; margin-left: -5px; }
.hdr-val { grid-column: 2; grid-row: 1; background: #808080; color: #d4d4d4; text-align: right; padding-right: 6px; font-size: 12.500px; line-height: 21px; }
.rule { grid-column: 1 / 3; grid-row: 2; background: linear-gradient(#b0b0b0 0 1px, #fff 1px 3px, #d0d0d0 3px); }

.names { grid-column: 1; grid-row: 3; background: linear-gradient(90deg, #fff 0 11px, #808080 11px); padding-top: 2.300px; position: relative; }
.values { grid-column: 2; grid-row: 3; background: #808080; padding-top: 2.300px; position: relative; }
.sig { height: 21.300px; display: flex; align-items: center; padding-left: 26px; color: #e8e8e8; white-space: nowrap; font-size: 12.900px; margin-left: 11px; position: relative; }
.sig > span:last-child { margin-left: 4px; }
.sel { background: #fff; color: #111; }
.s-ic { flex: none; width: 22px; height: 22px; margin-left: -2px; }
.xbox { position: absolute; left: 6px; top: 4px; width: 12px; height: 12px; background: #f4f4f4; color: #000; border-right: 1px solid #888; border-bottom: 1px solid #888; font: 700 13px/11px "Liberation Sans", sans-serif; text-align: center; }
.xbox::after { content: ""; position: absolute; left: 12px; top: 5px; width: 8px; height: 1px; background: #fff; }
.val { height: 21.300px; line-height: 21.300px; padding-left: 2px; color: #e8e8e8; font-size: 12.900px; }
.val.sel { color: #111; }
.endline { height: 1px; background: #111; margin: 0 19px 0 14px; }
.endline.short { margin: 0 6px 0 3px; }

.waves { grid-column: 3; grid-row: 1 / 4; width: 1449px; height: 342px; display: block; background: #000; }
.vbar { grid-column: 4; grid-row: 1 / 4; display: flex; flex-direction: column; padding-top: 26px; padding-bottom: 5px; background: #f0f0f0; position: relative; }
.vbar::before { content: ""; position: absolute; left: 0; right: 0; top: 0; height: 22px; background: #808080; }
.vb-btn { flex: none; height: 20px; background: #ececec; border-right: 1px solid #888; border-bottom: 1px solid #888; display: flex; align-items: center; justify-content: center; }
.vb-btn i { border: 5px solid transparent; }
.vb-btn.up i { border-top: 0; border-bottom: 6px solid #000; }
.vb-btn.dn i { border-bottom: 0; border-top: 6px solid #000; }
.vb-btn.dn { height: 16px; }
.vb-track { flex: 1; background: #f6f6f6; }

.now-name { grid-column: 1; grid-row: 5; background: linear-gradient(90deg, #f0f0f0 0 11px, #808080 11px); display: flex; align-items: center; justify-content: space-between; padding: 0 13px 0 11px; color: #dcdcdc; }
.now-val { grid-column: 2; grid-row: 5; background: #808080; color: #dcdcdc; text-align: right; padding-right: 12px; line-height: 27px; }
.ruler { grid-column: 3; grid-row: 5 / 7; width: 1449px; height: 49px; display: block; background: #000; }
.vb-gray { grid-column: 4; grid-row: 8; background: #808080; }
.vb-gray.big { grid-row: 5 / 7; }
.cur-name { grid-column: 1; grid-row: 6; background: linear-gradient(90deg, #f0f0f0 0 11px, #808080 11px 61px, #fff 61px); display: flex; align-items: center; justify-content: space-between; padding: 0 13px 0 11px; color: #111; }
.cur-val { grid-column: 2; grid-row: 6; background: #fff; text-align: right; padding-right: 12px; line-height: 21px; }
.gi { display: flex; gap: 1px; padding-left: 1px; }
.gi svg { width: 14px; height: 14px; }
.gi.lower { padding-left: 4px; }

.hs { grid-row: 8; display: flex; background: #f0f0f0; padding: 1px 1px 2px; border-bottom: 2px solid #8c8c8c; }
.hs-name { grid-column: 1; padding-left: 11px; }
.hs-val { grid-column: 2; }
.hs-wave { grid-column: 3; padding-left: 3px; padding-right: 2px; }
.hs-btn { flex: none; width: 20px; background: #e4e4e4; border-right: 1px solid #9a9a9a; border-bottom: 1px solid #9a9a9a; display: flex; align-items: center; justify-content: center; }
.hs-btn.narrow { width: 16px; }
.hs-btn i { border: 5px solid transparent; }
.hs-btn i.l { border-left: 0; border-right: 6px solid #9a9a9a; }
.hs-btn i.r { border-right: 0; border-left: 6px solid #9a9a9a; }
.hs-btn i.l.k { border-right-color: #000; }
.hs-btn i.r.k { border-left-color: #000; }
.hs-track { flex: 1; background: #f4f4f4; position: relative; }
.hs-track.marked { margin-left: 3px; background: #f0f0f0; }
.mark { position: absolute; left: 943px; top: 0; bottom: 0; width: 1px; background: #f0d060; }

.status { flex: none; margin-top: 3px; height: 23px; display: flex; border-top: 1px solid #c8c8c8; background: #f0f0f0; align-items: stretch; position: relative; }
.st-a { flex: none; width: 211px; padding-left: 6px; line-height: 22px; color: #222; border-right: 1px solid #9a9a9a; }
.st-b { flex: 1; }
.resize { flex: none; width: 14px; height: 14px; margin: 8px 2px 0 0; }
```
FILE: wave.js
```js
(function () {
  var NS = "http://www.w3.org/2000/svg";
  var X0 = 524, U = 15.014, ROW = 21.3, TOP = 207.7, H = 15, END = 72;
  function x(u) { return X0 + U * u; }
  function top(i) { return TOP + ROW * i; }
  function el(parent, name, attrs, text) {
    var e = document.createElementNS(NS, name);
    for (var k in attrs) e.setAttribute(k, attrs[k]);
    if (text) e.textContent = text;
    parent.appendChild(e);
    return e;
  }

  var w = document.getElementById("waves");
  el(w, "rect", { x: 519, y: 198.5, width: 1449, height: 1, fill: "#909090" });
  el(w, "rect", { x: 519, y: 199.5, width: 1449, height: 2.5, fill: "#ffffff" });
  for (var k = 1; k <= 19; k++) {
    el(w, "path", { d: "M" + x(5 * k) + " 202V517", stroke: "#707070", "stroke-width": 1.4 });
  }

  function digital(i, startHigh, edges) {
    var t = top(i), hi = t, lo = t + H, mid = t + 7.5;
    el(w, "path", { d: "M525 " + mid + "H532.3", stroke: "#d00000", "stroke-width": 1.4, fill: "none" });
    var level = startHigh;
    var d = "M532.3 " + mid + "V" + (level ? hi : lo);
    edges.forEach(function (u) {
      d += "H" + x(u);
      level = !level;
      d += "V" + (level ? hi : lo);
    });
    d += "H" + x(END);
    el(w, "path", { d: d, stroke: "#00cc00", "stroke-width": 1.5, fill: "none" });
  }

  var WRITE = [40, 41, 43, 44];
  var FLUSH = [49, 50, 54, 55, 60, 61, 63, 64, 66, 67];
  var BRANCH = [46, 47, 54, 55, 62, 63, 65, 66];
  var EXBR = [47, 48, 63, 64, 66, 67];
  digital(1, true, WRITE);
  digital(2, true, WRITE);
  digital(3, false, FLUSH);
  digital(4, false, FLUSH);
  digital(5, false, BRANCH);
  digital(6, true, WRITE);
  digital(7, false, FLUSH);
  digital(8, false, FLUSH);
  digital(9, false, BRANCH);
  digital(10, false, EXBR);

  function bus(i, edges, labels) {
    var t = top(i), b = t + H, mid = t + 7.5;
    el(w, "path", { d: "M525 " + mid + "H531", stroke: "#d00000", "stroke-width": 1.4, fill: "none" });
    var pts = [532.3 - X0].map(function (v) { return v / U; }).concat(edges, [END]);
    var d = "";
    for (var n = 0; n < pts.length - 1; n++) {
      var a = x(pts[n]) + 0.6, c = x(pts[n + 1]) - 0.6;
      if (n === pts.length - 2) {
        d += "M" + c + " " + t + "H" + (a + 1.6) + "L" + a + " " + (t + 3) + "V" + (b - 3) + "L" + (a + 1.6) + " " + b + "H" + c;
      } else {
        d += "M" + (a + 1.6) + " " + t + "H" + (c - 1.6) + "L" + c + " " + (t + 3) + "V" + (b - 3) + "L" + (c - 1.6) + " " + b + "H" + (a + 1.6) + "L" + a + " " + (b - 3) + "V" + (t + 3) + "Z";
      }
    }
    el(w, "path", { d: d, stroke: "#a6dca6", "stroke-width": 1.4, fill: "none" });
    labels.forEach(function (l) {
      el(w, "text", { x: l[0], y: mid + 4.6, fill: "#e2e2e2", "font-size": 12.8, "font-family": "Noto Sans, sans-serif" }, l[1]);
    });
  }
  bus(0, FLUSH, [[537, "2'b00"], [1279, "2'b00"], [1354, "2'b00"], [1535.5, "2'b00"]]);
  var ops = [];
  for (var u = 11; u <= 40; u++) ops.push(u);
  ops = ops.concat([42, 43, 45, 46, 47, 48, 49, 51, 52, 53, 54, 55, 56, 57, 58, 59, 62, 63, 65, 66, 67, 68, 69, 70]);
  bus(11, ops, [[537, "6'b000000"], [1413.5, "6'b..."]]);

  var CUR = x(65);
  el(w, "rect", { x: CUR - 1.5, y: 176, width: 3, height: 23, fill: "#e8c000" });
  el(w, "rect", { x: CUR - 1.5, y: 202, width: 3, height: 315.5, fill: "#d4b400" });
  [[1, 0], [2, 0], [3, 15], [4, 15], [6, 0], [7, 15], [8, 15], [10, 15]].forEach(function (p) {
    el(w, "rect", { x: CUR - 1.5, y: top(p[0]) + p[1] - 0.7, width: 3, height: 1.4, fill: "#e86000" });
  });
  [5, 9].forEach(function (i) {
    el(w, "rect", { x: CUR - 1, y: top(i), width: 1.4, height: 15, fill: "#e86000" });
  });
  el(w, "rect", { x: CUR - 1.2, y: top(11), width: 2.4, height: 15, fill: "#5a50c0" });
  el(w, "rect", { x: CUR - 1.5, y: top(0) - 0.7, width: 3, height: 1.4, fill: "#8a8ab0" });
  el(w, "rect", { x: CUR - 1.5, y: top(0) + 14.3, width: 3, height: 1.4, fill: "#8a8ab0" });

  var r = document.getElementById("ruler");
  for (var m = 0; m <= 191; m++) {
    var tx = X0 + 7.507 * m;
    if (tx > 1962) break;
    var major = m % 10 === 0 && m > 0;
    el(r, "path", { d: "M" + tx + " " + (major ? 521 : 525) + "V530", stroke: "#00b000", "stroke-width": 1.2 });
  }
  el(r, "text", { x: 520, y: 546, fill: "#00c000", "font-size": 13, "font-family": "Noto Sans, sans-serif" }, "ps");
  for (var j = 1; j <= 9; j++) {
    el(r, "text", { x: X0 + 150.14 * j, y: 546, "text-anchor": "middle", fill: "#00c000", "font-size": 13, "font-family": "Noto Sans, sans-serif" }, (j * 100000) + " ps");
  }
  el(r, "rect", { x: 519, y: 549, width: 1445, height: 1, fill: "#555" });
  el(r, "rect", { x: CUR - 1.5, y: 521, width: 3, height: 9, fill: "#e85000" });
  el(r, "rect", { x: CUR - 1.5, y: 530, width: 3, height: 19, fill: "#f0c000" });
  el(r, "rect", { x: 1466.5, y: 549.5, width: 68, height: 19.5, fill: "#000", stroke: "#d4a800", "stroke-width": 1.5 });
  el(r, "text", { x: 1500.5, y: 565, "text-anchor": "middle", fill: "#d8b000", "font-size": 13, "font-family": "Noto Sans, sans-serif" }, "650000 ps");
})();
```
